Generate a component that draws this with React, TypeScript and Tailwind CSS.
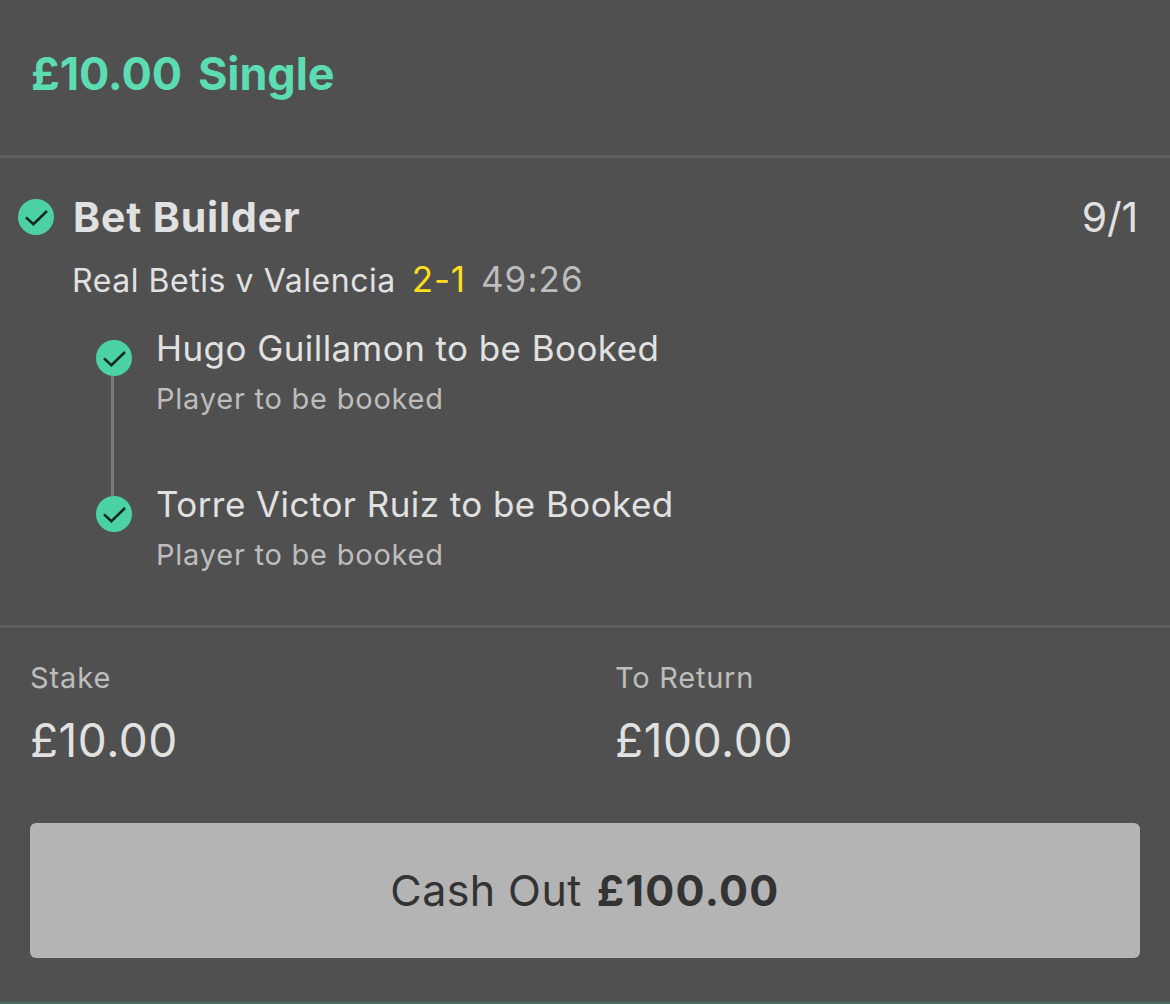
interface Selection {
  id: number;
  name: string;
  market: string;
}

const selections: Selection[] = [
  { id: 1, name: "Hugo Guillamon to be Booked", market: "Player to be booked" },
  { id: 2, name: "Torre Victor Ruiz to be Booked", market: "Player to be booked" },
];

function WonIcon() {
  return (
    <svg width="36" height="36" viewBox="0 0 36 36" fill="none" className="shrink-0">
      <circle cx="18" cy="18" r="18" fill="#4bd1a5" />
      <path d="M8 18.3 L15.4 25.2 L29 12" stroke="#10281f" strokeWidth="2.5" />
    </svg>
  );
}

export default function App() {
  return (
    <div className="flex h-[1004px] w-[1170px] flex-col overflow-hidden border-b-2 border-[#4d6c61] bg-[#505050] font-['Inter',sans-serif] whitespace-nowrap text-[#e1e1e1]">
      {/* Header */}
      <div className="h-[158px] border-b-3 border-[#5f5f5f] pt-[46px] pl-[31px]">
        <h1 className="flex text-[45px] leading-[56px] font-bold text-[#5cdcb2]">
          <span className="tracking-[-0.1px]">£10.00</span>
          <span className="ml-[16px] tracking-[-0.1px]">Single</span>
        </h1>
      </div>

      {/* Bet */}
      <div className="h-[470px] border-b-3 border-[#5f5f5f] pt-[34px]">
        <div className="flex h-[50px] items-center pr-[32px] pl-[18px]">
          <WonIcon />
          <h2 className="mt-[2px] ml-[19px] text-[41px] font-bold tracking-[0.85px]">Bet Builder</h2>
          <span className="mt-[2px] ml-auto text-[41px] font-normal tracking-[-0.2px]">9/1</span>
        </div>

        <div className="mt-[17px] flex h-[41px] items-baseline pl-[72px] leading-[40px]">
          <span className="text-[32px] tracking-[0.55px]">Real Betis v Valencia</span>
          <span className="ml-[16px] text-[35px] tracking-[0.8px] text-[#ffdf1b]">2-1</span>
          <span className="ml-[15px] text-[35px] tracking-[1.1px] text-[#bdbdbd]">49:26</span>
        </div>

        {/* Selections */}
        <div className="mt-[24px] pl-[96px]">
          {selections.map((selection, index) => (
            <div key={selection.id} className="flex h-[156px]">
              <div className="flex w-[36px] flex-col pt-[16px]">
                <WonIcon />
                {index < selections.length - 1 && (
                  <div className="-mb-[16px] ml-[15px] w-[3px] flex-1 bg-[#7b7b7b]" />
                )}
              </div>
              <div className="ml-[24px]">
                <p className="text-[35px] leading-[49px] tracking-[0.43px]">{selection.name}</p>
                <p className="text-[29px] leading-[51px] tracking-[0.77px] text-[#bdbdbd]">{selection.market}</p>
              </div>
            </div>
          ))}
        </div>
      </div>

      {/* Stake / Return */}
      <div className="grid h-[195px] grid-cols-2 pt-[30px]">
        <div className="pl-[30px]">
          <p className="text-[29px] leading-[40px] tracking-[0.9px] text-[#bdbdbd]">Stake</p>
          <p className="mt-[14px] text-[46px] leading-[56px] tracking-[0.5px]">£10.00</p>
        </div>
        <div className="pl-[30px]">
          <p className="text-[29px] leading-[40px] tracking-[0.75px] text-[#bdbdbd]">To Return</p>
          <p className="mt-[14px] text-[46px] leading-[56px] tracking-[0.6px]">£100.00</p>
        </div>
      </div>

      {/* Cash out */}
      <button className="mx-[30px] flex h-[135px] items-center justify-center rounded-md bg-[#b4b4b4] text-[43px] text-[#333333]">
        <span className="tracking-[0.4px]">Cash Out</span>
        <span className="ml-[15px] font-bold tracking-[1.3px]">£100.00</span>
      </button>
    </div>
  );
}
